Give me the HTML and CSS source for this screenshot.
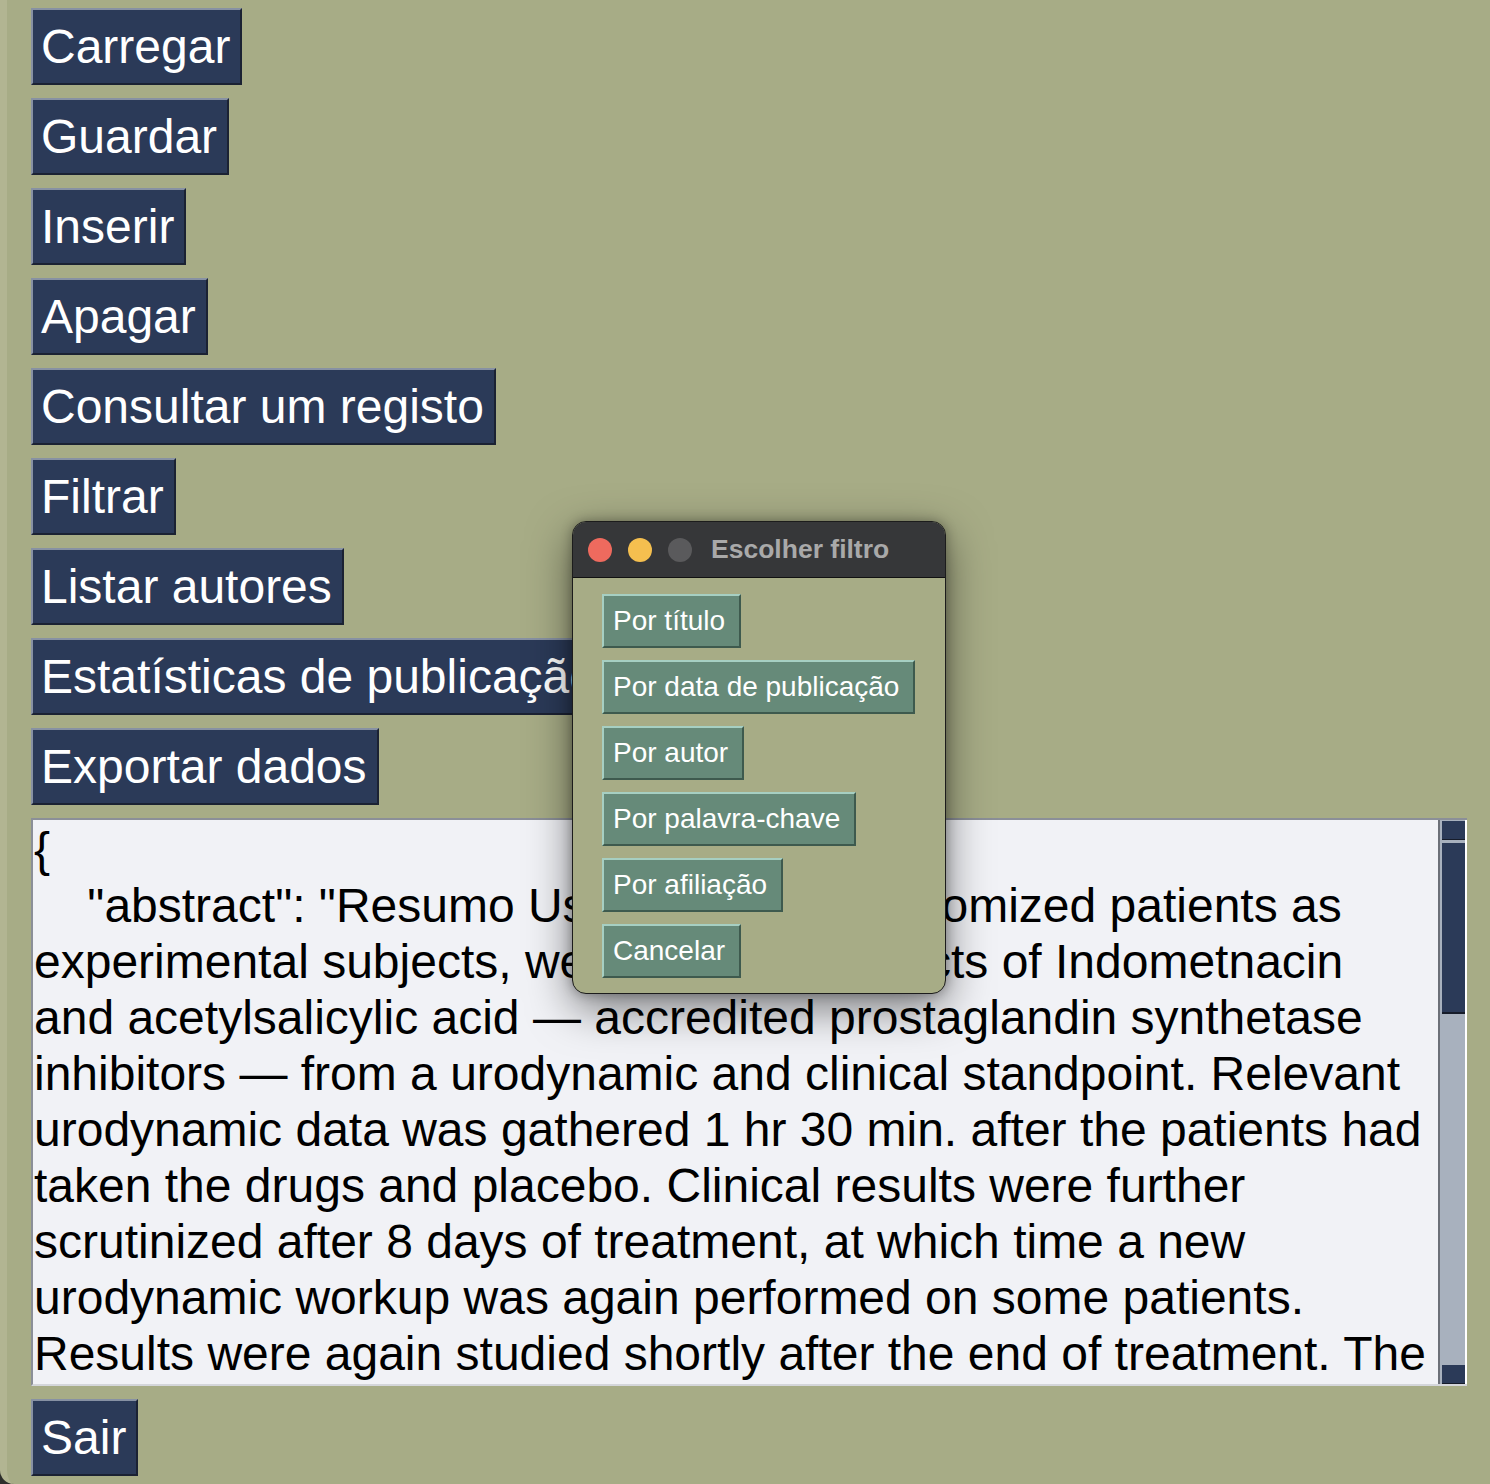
FILE: index.html
```html
<!DOCTYPE html>
<html lang="pt">
<head>
<meta charset="utf-8">
<title>Gestor de publicações</title>
<link rel="stylesheet" href="styles.css">
</head>
<body>
<div class="window">
  <div class="menu">
    <button class="btn">Carregar</button>
    <button class="btn">Guardar</button>
    <button class="btn">Inserir</button>
    <button class="btn">Apagar</button>
    <button class="btn">Consultar um registo</button>
    <button class="btn">Filtrar</button>
    <button class="btn">Listar autores</button>
    <button class="btn">Estatísticas de publicação</button>
    <button class="btn">Exportar dados</button>
    <div class="textbox">
      <div class="text">{
    "abstract": "Resumo Using hospital-randomized patients as
experimental subjects, we studied the effects of Indometnacin
and acetylsalicylic acid — accredited prostaglandin synthetase
inhibitors — from a urodynamic and clinical standpoint. Relevant
urodynamic data was gathered 1 hr 30 min. after the patients had
taken the drugs and placebo. Clinical results were further
scrutinized after 8 days of treatment, at which time a new
urodynamic workup was again performed on some patients.
Results were again studied shortly after the end of treatment. The</div>
      <div class="scrollbar">
        <div class="sb-arrow"></div>
        <div class="sb-thumb"></div>
        <div class="sb-track"></div>
        <div class="sb-arrow"></div>
      </div>
    </div>
    <button class="btn">Sair</button>
  </div>

  <div class="dialog">
    <div class="titlebar">
      <span class="light red"></span>
      <span class="light yellow"></span>
      <span class="light gray"></span>
      <span class="title">Escolher filtro</span>
    </div>
    <div class="dialog-body">
      <button class="dbtn">Por título</button>
      <button class="dbtn">Por data de publicação</button>
      <button class="dbtn">Por autor</button>
      <button class="dbtn">Por palavra-chave</button>
      <button class="dbtn">Por afiliação</button>
      <button class="dbtn">Cancelar</button>
    </div>
  </div>
</div>
</body>
</html>
```

FILE: styles.css
```css
html, body {
  margin: 0;
  padding: 0;
  background: #2e2f2c;
}
body {
  width: 1490px;
  height: 1484px;
  overflow: hidden;
  font-family: "Liberation Sans", Arial, sans-serif;
}
.window {
  position: relative;
  box-sizing: border-box;
  width: 1490px;
  height: 1484px;
  background: #a7ac86;
  border-left: 7px solid #b2b592;
  border-bottom-left-radius: 14px;
}
.menu {
  display: flex;
  flex-direction: column;
  align-items: flex-start;
  gap: 13px;
  padding: 8px 0 0 24px;
}
.btn {
  font-family: "Liberation Sans", Arial, sans-serif;
  font-size: 48px;
  line-height: 57px;
  color: #ffffff;
  background: #2b3a58;
  border: 2px solid;
  border-color: #8791a3 #1b2233 #1b2233 #8791a3;
  padding: 8px 10px 8px 8px;
  margin: 0;
  cursor: pointer;
  text-align: left;
}
.textbox {
  display: flex;
  width: 1436px;
  height: 568px;
  box-sizing: border-box;
  background: #f1f2f6;
  border-top: 2px solid #8b8f98;
  border-left: 2px solid #8b8f98;
  border-bottom: 2px solid #d4d6da;
  overflow: hidden;
}
.text {
  flex: 1;
  white-space: pre;
  overflow: hidden;
  font-size: 48px;
  line-height: 56px;
  color: #000;
  padding: 2px 0 0 1px;
}
.scrollbar {
  width: 29px;
  display: flex;
  flex-direction: column;
  box-sizing: border-box;
  border-left: 2px solid #6c7078;
  border-right: 2px solid #ffffff;
  background: #a8b1be;
  padding: 1px 0 0 2px;
}
.sb-arrow {
  height: 18px;
  background: #2b3a58;
  border-bottom: 1px solid #161c2a;
}
.sb-thumb {
  height: 169px;
  margin-top: 3px;
  background: #2b3a58;
  border-bottom: 2px solid #161c2a;
}
.sb-track {
  flex: 1;
}
.dialog {
  position: absolute;
  left: 565px;
  top: 521px;
  width: 374px;
  height: 473px;
  box-sizing: border-box;
  background: #a7ac86;
  border: 1px solid #1c1c1c;
  border-radius: 14px;
  overflow: hidden;
  box-shadow: 0 14px 44px rgba(0, 0, 0, 0.5), 0 0 12px rgba(0, 0, 0, 0.3);
}
.titlebar {
  height: 56px;
  box-sizing: border-box;
  background: #363739;
  border-bottom: 1px solid #111;
  display: flex;
  align-items: center;
  padding-left: 15px;
  gap: 16px;
}
.light {
  width: 24px;
  height: 24px;
  border-radius: 50%;
  display: inline-block;
}
.red { background: #ee6a5e; }
.yellow { background: #f5bf4f; }
.gray { background: #5a5a5c; }
.title {
  font-weight: bold;
  font-size: 26.5px;
  color: #a9a9a9;
  margin-left: 3px;
}
.dialog-body {
  display: flex;
  flex-direction: column;
  align-items: flex-start;
  gap: 12px;
  padding: 16px 0 0 29px;
}
.dbtn {
  font-family: "Liberation Sans", Arial, sans-serif;
  font-size: 28px;
  line-height: 32px;
  color: #ffffff;
  background: #668a79;
  border: 2px solid;
  border-color: #a6cfc2 #3e5a4e #3e5a4e #a6cfc2;
  padding: 9px 14px 9px 9px;
  margin: 0;
  text-align: left;
  cursor: pointer;
}
```
